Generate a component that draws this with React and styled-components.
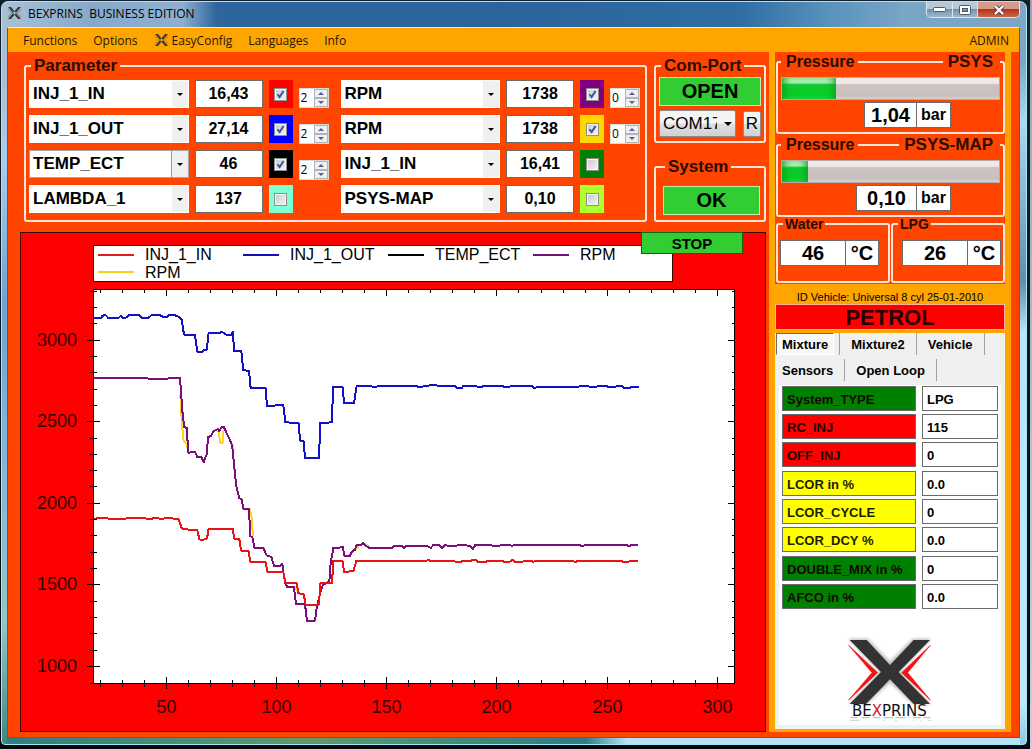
import React from "react";
import styled, { createGlobalStyle } from "styled-components";

const GlobalStyle = createGlobalStyle`
  *, *::before, *::after { box-sizing: border-box; }
  body {
    margin: 0;
    background: #05090d;
    font-family: "Liberation Sans", Arial, sans-serif;
    color: #000;
  }
  button, input, select { font: inherit; color: inherit; margin: 0; }
`;

const Desktop = styled.div`
  min-height: 100vh;
  display: flex;
  padding: 1px 5px 4px 1px;
  background:
    linear-gradient(#8fa9bb, #c3d3de) right / 2px 100% no-repeat,
    linear-gradient(#12202c, #05090d);
`;

const Window = styled.div`
  flex: 1;
  min-width: 0;
  display: flex;
  flex-direction: column;
  padding: 0 6px 6px 5px;
  border: 1px solid #a8e6f7;
  border-radius: 7px 7px 4px 4px;
  background:
    linear-gradient(to bottom, transparent 0 80px, #a9cdec 160px, #6ba3d2 300px, #7bb4dd 420px, #8fc7c9 620px, #3b8a86 100%) left / 5px 100% no-repeat,
    linear-gradient(to bottom, transparent 0 60px, #a9d9f5 120px, #5e8fae 280px, #b5e6fa 330px, #bfe9fb 700px, #8ecbe0 100%) right / 6px 100% no-repeat,
    linear-gradient(to right, #2e7f7e, #5f9a6c 30%, #2c7f84 57%, #b4e4f6 61%) bottom / 100% 6px no-repeat,
    linear-gradient(to right, #a9c1d6 0, #86a9ca 90px, #8eafd0 180px, #2d659c 215px, #2b639d 500px, #2f6ea5 740px, #5590bb 820px, #79a5c6 900px, #7fa6c4 100%);
`;

const TitleBar = styled.header`
  display: flex;
  align-items: flex-start;
  justify-content: space-between;
  height: 25px;
`;

const Title = styled.h1`
  display: flex;
  align-items: center;
  gap: 6px;
  margin: 0;
  height: 22px;
  font: 400 12px "Open Sans", "Noto Sans", sans-serif;
  white-space: pre;
`;

const WindowButtons = styled.div`
  display: flex;
  border: 1px solid #d9e6f0;
  border-top: 0;
  border-radius: 0 0 5px 5px;
  overflow: hidden;
`;

const WindowButton = styled.button`
  display: grid;
  place-items: center;
  width: ${(p) => (p.$close ? 42 : 25)}px;
  height: 15px;
  padding: 0;
  border: 0;
  border-left: ${(p) => (p.$first ? 0 : 1)}px solid #d9e6f0;
  background: ${(p) =>
    p.$close
      ? "linear-gradient(#d99a8c 0 45%, #b5321b 50%, #c8694a)"
      : "linear-gradient(#b5c9d9 0 45%, #7592aa 50%, #9bb8cc)"};
`;

const Client = styled.div`
  flex: 1;
  display: flex;
  flex-direction: column;
  border: 1px solid #6d5a3c;
  border-top-color: #dcecf5;
  background: #ff4500;
`;

const MenuBar = styled.nav`
  display: flex;
  align-items: center;
  height: 24px;
  padding: 0 10px 0 15px;
  gap: 16px;
  background: #ffa500;
`;

const MenuItem = styled.button`
  display: flex;
  align-items: center;
  gap: 3px;
  padding: 0;
  border: 0;
  background: none;
  color: #241700;
  font: 400 12px "Open Sans", "Noto Sans", sans-serif;
  margin-left: ${(p) => (p.$end ? "auto" : 0)};
`;

const Body = styled.main`
  flex: 1;
  display: grid;
  grid-template-columns: minmax(0, 1fr) 242px;
  padding: 0 8px 5px 0;
`;

const LeftPane = styled.section`
  display: flex;
  flex-direction: column;
  gap: 10px;
  padding: 4px 3px 0 12px;
`;

const Controls = styled.div`
  display: flex;
  gap: 7px;
  padding-left: 4px;
`;

const Group = styled.fieldset`
  min-width: 0;
  margin: 0;
  border: 2px solid #ffe6da;
  border-radius: 3px;
  padding: ${(p) => p.$pad || "0 3px"};
  flex: ${(p) => (p.$grow ? "1" : "none")};
`;

const GroupTitle = styled.legend`
  margin-left: ${(p) => p.$inset || 2}px;
  padding: 0 ${(p) => (p.$small ? 2 : 3)}px;
  height: ${(p) => (p.$small ? 12 : 20)}px;
  font-size: ${(p) => (p.$small ? 14 : 17)}px;
  line-height: ${(p) => (p.$small ? 12 : 20)}px;
  font-weight: 700;
  color: #2a0d00;
`;

const SplitTitle = styled.legend`
  display: flex;
  align-items: center;
  gap: 3px;
  width: 100%;
  height: 20px;
  padding: 0 7px 0 5px;
  font-size: 16px;
  line-height: 20px;
  font-weight: 700;
  color: #2a0d00;
`;

const TitleRule = styled.span`
  flex: 1;
  height: 2px;
  background: #ffe6da;
`;

const TitleTag = styled.span`
  font-size: 17px;
  padding-left: 2px;
`;

const Channels = styled.div`
  display: grid;
  grid-template-columns: 1fr 1fr;
  gap: 12px;
  padding: 4px 2px 7px 0;
`;

const ChannelBlock = styled.div`
  display: flex;
  gap: 6px;
`;

const ChannelRows = styled.div`
  flex: 1;
  min-width: 0;
  display: flex;
  flex-direction: column;
  gap: 7px;
`;

const ChannelRow = styled.div`
  display: flex;
  gap: 6px;
  height: 28px;
`;

const Combo = styled.span`
  position: relative;
  flex: 1;
  min-width: 0;
  display: flex;
  &::after {
    content: "";
    position: absolute;
    right: 6px;
    top: 13px;
    border: 3px solid transparent;
    border-top-color: #000;
    border-bottom: 0;
    pointer-events: none;
  }
`;

const ComboSelect = styled.select`
  appearance: none;
  flex: 1;
  min-width: 0;
  height: 28px;
  padding: 0 20px 1px 3px;
  border: 1px solid ${(p) => (p.$active ? "#a5a5a5" : "#fff")};
  border-radius: 0;
  background: linear-gradient(to left, #f0f0f0 16px, ${(p) => (p.$active ? "#999" : "#fff")} 16px 17px, #fff 17px);
  font-size: 17px;
  font-weight: 700;
`;

const Reading = styled.output`
  display: grid;
  place-items: center;
  width: ${(p) => p.$w || 68}px;
  height: ${(p) => p.$h || 28}px;
  border: 1px solid #6b6b6b;
  margin-left: ${(p) => (p.$joined ? -1 : 0)}px;
  background: #fff;
  font-size: ${(p) => p.$size || 16}px;
  font-weight: 700;
`;

const ColourCell = styled.label`
  display: grid;
  place-items: center;
  width: 24px;
  height: 28px;
  background: ${(p) => p.$colour};
`;

const Tick = styled.input`
  appearance: none;
  width: 13px;
  height: 13px;
  border: 1px solid #8e8f8f;
  outline: 1px solid #f4f4f4;
  outline-offset: -2px;
  background: linear-gradient(135deg, #c5c9cf, #f5f5f5);
  &:checked {
    background:
      url("data:image/svg+xml,%3Csvg xmlns='http://www.w3.org/2000/svg' viewBox='0 0 11 11'%3E%3Cpath d='M2.5 5.2 4.6 8 8.6 2' fill='none' stroke='%233b4f9b' stroke-width='1.9'/%3E%3C/svg%3E"),
      linear-gradient(135deg, #c5c9cf, #f5f5f5);
  }
`;

const Spinners = styled.div`
  display: flex;
  flex-direction: column;
  gap: 16px;
  width: 30px;
  padding-top: 8px;
`;

const Spinner = styled.div`
  display: flex;
  height: 20px;
  border: 1px solid #d8d8d8;
  background: #fff;
`;

const SpinnerInput = styled.input`
  flex: 1;
  width: 10px;
  padding: 0 0 2px 1px;
  border: 0;
  background: none;
  font: 400 12px "Open Sans", sans-serif;
`;

const SpinnerKeys = styled.div`
  display: grid;
  grid-template-rows: 1fr 1fr;
  width: 14px;
`;

const SpinnerKey = styled.button`
  display: grid;
  place-items: center;
  padding: 0;
  border: 1px solid #b4b4b4;
  background: #efefef;
`;

const SideColumn = styled.div`
  width: 112px;
  display: flex;
  flex-direction: column;
  justify-content: space-between;
`;

const GreenButton = styled.button`
  display: block;
  width: 100%;
  height: 29px;
  padding: 0;
  border: 1px solid #b9f0b0;
  background: #32cd32;
  font-size: 20px;
  font-weight: 700;
`;

const PortRow = styled.div`
  display: flex;
  justify-content: space-between;
  align-items: center;
  padding-top: 4px;
`;

const PortCombo = styled(Combo)`
  flex: none;
  width: 77px;
  &::after { right: 4px; top: 12px; border-width: 4px; border-bottom: 0; }
`;

const PortSelect = styled.select`
  appearance: none;
  width: 77px;
  height: 27px;
  padding: 0 18px 0 3px;
  border: 1px solid #8a8a8a;
  border-radius: 2px;
  background: linear-gradient(#f4f4f4 0 48%, #dedede 52%, #d2d2d2);
  font-size: 17px;
  font-weight: 400;
  text-overflow: clip;
`;

const SmallButton = styled.button`
  width: 18px;
  height: 26px;
  padding: 0;
  border: 1px solid #8a8a8a;
  border-radius: 2px;
  background: linear-gradient(#f4f4f4 0 48%, #dedede 52%, #d2d2d2);
  font-size: 17px;
`;

const ChartPanel = styled.section`
  position: relative;
  flex: 1;
  border: 1px solid #3a0800;
  background: #ff0000;
  padding-top: 12px;
`;

const StopButton = styled.button`
  position: absolute;
  top: -1px;
  right: 22px;
  width: 102px;
  height: 22px;
  padding: 0;
  border: 1px solid #14600f;
  background: #32cd32;
  font-size: 15px;
  font-weight: 700;
`;

const ChartLegend = styled.ul`
  display: grid;
  grid-template-columns: repeat(3, 145px) 1fr;
  width: 78%;
  height: 37px;
  margin: 0 0 0 72px;
  padding: 0 0 0 4px;
  border: 1px solid #3a0800;
  background: #fff;
  list-style: none;
`;

const LegendItem = styled.li`
  display: flex;
  align-items: center;
  gap: 11px;
  height: 17px;
  font-size: 16px;
  line-height: 17px;
  &::before {
    content: "";
    width: 36px;
    height: 2px;
    background: ${(p) => p.$colour};
  }
`;

const Plot = styled.svg`
  display: block;
  width: 100%;
  height: auto;
  font-size: 18px;
  fill: #300;
`;

const RightPane = styled.aside`
  display: flex;
  flex-direction: column;
  padding: 0 6px 3px 6px;
  background: #ffa500;
`;

const Gauges = styled.div`
  display: flex;
  flex-direction: column;
  gap: 1px;
  padding: 0 0 1px 1px;
  background: #ff4500;
`;

const Bar = styled.div`
  height: 23px;
  margin-top: 5px;
  border: 1px solid #b8aaa6;
  background: linear-gradient(#efeae8 0 25%, #cbc4c1 32%, #c8c0bd 85%, #d9d3d0);
`;

const BarFill = styled.div`
  height: 100%;
  background: linear-gradient(#a8f0b0 0 22%, #14c832 32%, #03cf22 80%, #20d848);
  box-shadow: inset 8px 0 8px -6px #0a9a20, inset -8px 0 8px -6px #0a9a20;
`;

const GaugeValue = styled.div`
  display: flex;
  justify-content: ${(p) => (p.$start ? "flex-start" : "flex-end")};
  padding: ${(p) => p.$pad || "2px 49px 4px 0"};
`;

const TempRow = styled.div`
  display: grid;
  grid-template-columns: 1fr 1fr;
  gap: 1px;
`;

const VehicleId = styled.p`
  margin: 0;
  padding: 5px 0 0;
  height: 20px;
  font: 400 11px/16px "Liberation Sans", sans-serif;
  text-align: center;
`;

const FuelState = styled.div`
  display: grid;
  place-items: center;
  height: 26px;
  border: 1px solid #ffb09a;
  background: #ff0000;
  color: #2a0000;
  font-size: 22px;
  font-weight: 700;
`;

const TabPanel = styled.div`
  flex: 1;
  display: flex;
  flex-direction: column;
  margin-top: 3px;
  padding: 0 4px 4px;
  background: #f0f0f0;
`;

const TabRow = styled.div`
  display: flex;
  gap: 5px;
  height: 26px;
  margin: 0 -3px;
`;

const Tab = styled.button`
  height: 22px;
  padding: 0 5px;
  border: 1px solid transparent;
  ${(p) => p.$active && "border-color: #6b6b6b #fff #fff #6b6b6b;"}
  background: ${(p) => (p.$active ? "#f8f8f8" : "none")};
  font-size: 13px;
  font-weight: 700;
`;

const TabRule = styled.span`
  width: 1px;
  height: 22px;
  background: #a0a0a0;
`;

const TabPage = styled.div`
  flex: 1;
  display: flex;
  flex-direction: column;
  gap: 4px;
  padding: 1px 3px 0;
  background: #fff;
`;

const FieldSet = styled.div`
  display: flex;
  flex-direction: column;
  gap: 3px;
`;

const Field = styled.div`
  display: grid;
  grid-template-columns: 134px 1fr;
  gap: 6px;
  height: 25px;
`;

const FieldLabel = styled.label`
  padding: 2px 0 0 4px;
  border: 1px solid #6b6b6b;
  background: ${(p) => p.$colour};
  color: ${(p) => (p.$colour === "#ffff00" ? "#1c1c00" : "#140800")};
  font-size: 13px;
  line-height: 21px;
  font-weight: 700;
  white-space: nowrap;
`;

const FieldInput = styled.input`
  width: 100%;
  min-width: 0;
  padding: 2px 0 0 4px;
  border: 1px solid #6b6b6b;
  background: #fff;
  font-size: 13px;
  font-weight: 700;
`;

const Logo = styled.svg`
  display: block;
  flex: none;
  width: 90px;
  height: 92px;
  margin: 19px auto 0;
`;

const LEFT = [
  { name: "INJ_1_IN", value: "16,43", colour: "#ff0000", on: true, scale: "2" },
  { name: "INJ_1_OUT", value: "27,14", colour: "#0000ff", on: true, scale: "2" },
  { name: "TEMP_ECT", value: "46", colour: "#000000", on: true, scale: "2", active: true },
  { name: "LAMBDA_1", value: "137", colour: "#7fffd4", on: false },
];

const RIGHT = [
  { name: "RPM", value: "1738", colour: "#800080", on: true, scale: "0" },
  { name: "RPM", value: "1738", colour: "#ffd700", on: true, scale: "0" },
  { name: "INJ_1_IN", value: "16,41", colour: "#008000", on: false },
  { name: "PSYS-MAP", value: "0,10", colour: "#adff2f", on: false },
];

const SERIES = [
  ["INJ_1_IN", "#e01c1c"],
  ["INJ_1_OUT", "#1010b8"],
  ["TEMP_ECT", "#000000"],
  ["RPM", "#6e1272"],
  ["RPM", "#f2d21c"],
];

const FIELDS = [
  [["System_TYPE", "LPG", "#008000"], ["RC_INJ", "115", "#ff0000"], ["OFF_INJ", "0", "#ff0000"]],
  [["LCOR in %", "0.0", "#ffff00"], ["LCOR_CYCLE", "0", "#ffff00"], ["LCOR_DCY %", "0.0", "#ffff00"]],
  [["DOUBLE_MIX in %", "0", "#008000"], ["AFCO in %", "0.0", "#008000"]],
];

const TRACES = [
  {
    colour: "#ffd21e",
    points:
      "541,500 546,590 551,640 560,646 565,674 M655,610 661,645 668,645 671,604 M697,645 703,730 M749,843 754,860 759,925 M885,1078 900,1100 M1068,965 1078,950 M1100,950 1110,959 M1330,961 1337,953",
  },
  {
    colour: "#1212c4",
    points:
      "281,270 303,270 307,264 315,260 322,266 325,270 355,270 362,264 370,270 380,268 386,261 418,261 425,270 445,270 455,261 480,262 488,266 499,268 506,261 525,262 537,267 545,275 552,320 585,322 592,372 607,372 612,366 620,366 626,315 660,315 666,311 680,321 695,320 698,312 703,369 724,370 730,427 747,428 752,480 797,481 801,534 850,531 856,583 896,585 900,638 911,640 915,690 957,690 961,585 996,583 999,478 1028,478 1032,525 1062,525 1070,474 1110,474 1120,477 1145,474 1250,474 1255,478 1290,472 1365,474 1370,480 1386,480 1390,473 1430,475 1435,478 1460,473 1508,474 1515,478 1540,474 1595,473 1602,480 1615,477 1735,477 1740,473 1765,474 1770,478 1810,473 1830,477 1865,474 1872,480 1888,480 1895,477 1916,477",
  },
  {
    colour: "#7a0f7c",
    points:
      "281,451 443,451 450,454 470,452 540,451 548,560 553,597 560,600 565,674 585,672 592,687 605,688 611,703 615,690 620,680 624,628 634,623 640,610 655,602 658,610 664,598 672,598 682,620 694,645 698,665 705,740 710,780 718,811 725,813 730,842 747,843 751,925 757,927 763,959 790,960 800,982 814,987 822,1014 840,1014 847,1007 852,1045 856,1065 861,1076 882,1078 888,1129 915,1129 921,1178 945,1178 950,1140 955,1120 960,1098 968,1072 988,1060 992,1005 1000,960 1029,958 1033,983 1050,983 1055,972 1065,965 1070,950 1085,950 1088,944 1105,959 1178,959 1182,954 1205,954 1212,960 1220,953 1280,953 1292,960 1300,951 1318,951 1327,960 1335,951 1345,954 1368,954 1375,950 1395,951 1412,955 1418,963 1426,951 1470,951 1480,954 1498,953 1503,951 1530,951 1535,954 1545,951 1738,951 1745,954 1760,951 1880,951 1888,955 1895,951 1914,951",
  },
  {
    colour: "#e81414",
    points:
      "283,872 310,870 340,873 370,873 385,870 425,870 450,873 470,869 480,873 505,870 535,873 541,888 546,902 568,905 592,906 598,934 607,936 621,932 626,902 698,902 703,933 718,934 723,968 746,970 751,1001 797,1002 802,1032 850,1032 856,1065 890,1065 895,1096 911,1098 917,1130 957,1130 961,1066 996,1065 1000,999 1028,999 1032,1032 1060,1029 1069,999 1278,999 1286,995 1290,999 1362,999 1368,1002 1382,1002 1388,999 1412,999 1418,995 1428,995 1434,1001 1458,1001 1462,999 1508,999 1512,1001 1530,1001 1538,995 1544,1001 1568,1001 1574,999 1596,999 1598,1001 1610,999 1720,999 1725,1002 1735,999 1865,999 1870,1002 1885,1001 1890,999 1914,999",
  },
];

const X_TICKS = Array.from({ length: 29 }, (_, i) => 20 + i * 10);
const Y_TICKS = Array.from({ length: 24 }, (_, i) => 1000 + i * 100);
const xPos = (v) => Math.round(166 + (v - 50) * 2.203) + 0.5;
const yPos = (v) => Math.round(668 - (v - 1000) * 0.1632) + 0.5;

function Chart() {
  const ticks = [];
  X_TICKS.forEach((v) => {
    const big = v % 50 === 0;
    ticks.push(`M${xPos(v)} ${big ? 679 : 682}V${big ? 691 : 689}M${xPos(v)} 291v${big ? 7 : 4}`);
  });
  Y_TICKS.forEach((v) => {
    const big = v % 500 === 0;
    ticks.push(`M${big ? 87 : 90} ${yPos(v)}H${big ? 100 : 97}M735 ${yPos(v)}h${big ? -7 : -3}`);
  });
  return (
    <Plot viewBox="21 284 744 448" role="img" aria-label="Injection and RPM chart">
      <rect x="93.5" y="291.5" width="641" height="394" fill="#fff" stroke="#000" />
      <g
        transform="translate(0 230) scale(.33333)"
        fill="none"
        strokeWidth="6"
        strokeLinejoin="round"
        shapeRendering="crispEdges"
      >
        {TRACES.map((t) => (
          <path key={t.colour} d={`M${t.points}`} stroke={t.colour} />
        ))}
      </g>
      <path d={ticks.join("") + "M90 685.5H94"} stroke="#000" fill="none" />
      {[1000, 1500, 2000, 2500, 3000].map((v) => (
        <text key={v} x="77" y={yPos(v) + 5} textAnchor="end">{v}</text>
      ))}
      {[50, 100, 150, 200, 250, 300].map((v) => (
        <text key={v} x={xPos(v)} y="715" textAnchor="middle">{v}</text>
      ))}
    </Plot>
  );
}

function CrossIcon() {
  return (
    <svg width="15" height="14" viewBox="0 0 15 14" aria-hidden="true">
      <path d="M1 1h3L14 13h-3Z M14 1h-3L1 13h3Z" fill="#3c3c34" />
      <path d="M1 3l3.500 4L1 11M14 3l-3.500 4L14 11" fill="none" stroke="#7d5a4a" strokeWidth=".6" />
    </svg>
  );
}

function Block({ items, side }) {
  return (
    <ChannelBlock>
      <ChannelRows>
        {items.map((c, i) => (
          <ChannelRow key={i}>
            <Combo>
              <ComboSelect $active={c.active} aria-label={`${side} channel ${i + 1}`} defaultValue={c.name}>
                <option>{c.name}</option>
              </ComboSelect>
            </Combo>
            <Reading>{c.value}</Reading>
            <ColourCell $colour={c.colour}>
              <Tick type="checkbox" defaultChecked={c.on} aria-label={`Plot ${c.name}`} />
            </ColourCell>
          </ChannelRow>
        ))}
      </ChannelRows>
      <Spinners>
        {items.filter((c) => c.scale).map((c, i) => (
          <Spinner key={i}>
            <SpinnerInput aria-label={`Scale of ${c.name}`} defaultValue={c.scale} />
            <SpinnerKeys>
              <SpinnerKey aria-label="Increase">
                <svg width="6" height="3"><path d="M0 3 3 0l3 3Z" fill="#5061a8" /></svg>
              </SpinnerKey>
              <SpinnerKey aria-label="Decrease">
                <svg width="6" height="3"><path d="M0 0h6L3 3Z" fill="#5061a8" /></svg>
              </SpinnerKey>
            </SpinnerKeys>
          </Spinner>
        ))}
      </Spinners>
    </ChannelBlock>
  );
}

function Pressure({ tag, value, width, percent }) {
  return (
    <Group>
      <SplitTitle>
        <span>Pressure</span>
        <TitleRule />
        <TitleTag>{tag}</TitleTag>
      </SplitTitle>
      <Bar role="progressbar" aria-label={tag} aria-valuenow={percent}>
        <BarFill style={{ width: `${percent}%` }} />
      </Bar>
      <GaugeValue>
        <Reading $w={width} $h={26} $size={20}>{value}</Reading>
        <Reading $w={35} $h={26} $joined>bar</Reading>
      </GaugeValue>
    </Group>
  );
}

function Temperature({ name, value, start }) {
  return (
    <Group $pad="0 2px">
      <GroupTitle $small $inset={3}>{name}</GroupTitle>
      <GaugeValue $start={start} $pad="10px 0 15px">
        <Reading $w={66} $h={26} $size={20}>{value}</Reading>
        <Reading $w={34} $h={26} $size={20} $joined>°C</Reading>
      </GaugeValue>
    </Group>
  );
}

function BexLogo() {
  return (
    <Logo viewBox="0 0 270 276" role="img" aria-label="Bexprins">
      <defs>
        <filter id="soft" x="-10%" y="-10%" width="120%" height="120%">
          <feGaussianBlur stdDeviation="5" />
        </filter>
      </defs>
      <path d="M10 20H69L135 88 202 20H259L167 120 259 216H202L135 152 67 216H10L102 120Z" fill="#999" opacity=".6" filter="url(#soft)" />
      <path d="M14 24H65L135 99 206 24H255L161 120 255 216H206L135 142 63 216H14L108 120Z" fill="#333" />
      <path d="M11 40 98 122 11 204 81 122ZM256 40 170 122 256 204 188 122Z" fill="#f01414" stroke="#f01414" strokeWidth="2" />
      <text x="133" y="251" textAnchor="middle" fontFamily="DejaVu Sans" fontSize="45" fill="#111">
        BE<tspan fill="#d01818">X</tspan>PRINS
      </text>
      <path d="M16 257h22M50 257h24M84 257h22M116 257h28M154 257h28M190 257h4M204 257h24M236 257h20" stroke="#999" strokeWidth="3" opacity=".7" />
      <path d="M14 265h30M116 265h5M150 265h6M204 265h4M224 265h4M250 265h8" stroke="#bbb" strokeWidth="4" opacity=".6" />
    </Logo>
  );
}

export default function App() {
  return (
    <Desktop>
      <GlobalStyle />
      <Window>
        <TitleBar>
          <Title><CrossIcon />{"BEXPRINS  BUSINESS EDITION"}</Title>
          <WindowButtons>
            <WindowButton $first aria-label="Minimize">
              <svg width="13" height="5"><rect x=".5" y=".5" width="12" height="4" rx="1" fill="#fff" stroke="#4c5a68" /></svg>
            </WindowButton>
            <WindowButton aria-label="Maximize">
              <svg width="12" height="10"><rect x=".5" y=".5" width="11" height="9" rx="1" fill="#fff" stroke="#4c5a68" /><rect x="3.500" y="3.500" width="5" height="3" fill="#7b94a8" stroke="#4c5a68" /></svg>
            </WindowButton>
            <WindowButton $close aria-label="Close">
              <svg width="12" height="10"><path d="M2 1 10 9M10 1 2 9" stroke="#5d3a3a" strokeWidth="4" /><path d="M2 1 10 9M10 1 2 9" stroke="#fff" strokeWidth="2.400" /></svg>
            </WindowButton>
          </WindowButtons>
        </TitleBar>
        <Client>
          <MenuBar>
            <MenuItem>Functions</MenuItem>
            <MenuItem>Options</MenuItem>
            <MenuItem><CrossIcon />EasyConfig</MenuItem>
            <MenuItem>Languages</MenuItem>
            <MenuItem>Info</MenuItem>
            <MenuItem $end>ADMIN</MenuItem>
          </MenuBar>
          <Body>
            <LeftPane>
              <Controls>
                <Group $grow>
                  <GroupTitle>Parameter</GroupTitle>
                  <Channels>
                    <Block items={LEFT} side="Left" />
                    <Block items={RIGHT} side="Right" />
                  </Channels>
                </Group>
                <SideColumn>
                  <Group $pad="1px 3px 4px">
                    <GroupTitle>Com-Port</GroupTitle>
                    <GreenButton>OPEN</GreenButton>
                    <PortRow>
                      <PortCombo>
                        <PortSelect aria-label="Port" defaultValue="COM17"><option>COM17</option></PortSelect>
                      </PortCombo>
                      <SmallButton>R</SmallButton>
                    </PortRow>
                  </Group>
                  <Group $pad="9px 4px 5px 7px">
                    <GroupTitle>System</GroupTitle>
                    <GreenButton>OK</GreenButton>
                  </Group>
                </SideColumn>
              </Controls>
              <ChartPanel>
                <ChartLegend>
                  {SERIES.map(([name, colour], i) => (
                    <LegendItem key={i} $colour={colour}>{name}</LegendItem>
                  ))}
                </ChartLegend>
                <Chart />
                <StopButton>STOP</StopButton>
              </ChartPanel>
            </LeftPane>
            <RightPane>
              <Gauges>
                <Pressure tag="PSYS" value="1,04" width={53} percent={25} />
                <Pressure tag="PSYS-MAP" value="0,10" width={61} percent={12} />
                <TempRow>
                  <Temperature name="Water" value="46" start />
                  <Temperature name="LPG" value="26" />
                </TempRow>
              </Gauges>
              <VehicleId>ID Vehicle: Universal 8 cyl 25-01-2010</VehicleId>
              <FuelState>PETROL</FuelState>
              <TabPanel>
                <TabRow>
                  <Tab $active>Mixture</Tab><TabRule />
                  <Tab>Mixture2</Tab><TabRule />
                  <Tab>Vehicle</Tab><TabRule />
                </TabRow>
                <TabRow>
                  <Tab>Sensors</Tab><TabRule />
                  <Tab>Open Loop</Tab><TabRule />
                </TabRow>
                <TabPage>
                  {FIELDS.map((group, g) => (
                    <FieldSet key={g}>
                      {group.map(([name, value, colour]) => (
                        <Field key={name}>
                          <FieldLabel htmlFor={name} $colour={colour}>{name}</FieldLabel>
                          <FieldInput id={name} defaultValue={value} />
                        </Field>
                      ))}
                    </FieldSet>
                  ))}
                  <BexLogo />
                </TabPage>
              </TabPanel>
            </RightPane>
          </Body>
        </Client>
      </Window>
    </Desktop>
  );
}
